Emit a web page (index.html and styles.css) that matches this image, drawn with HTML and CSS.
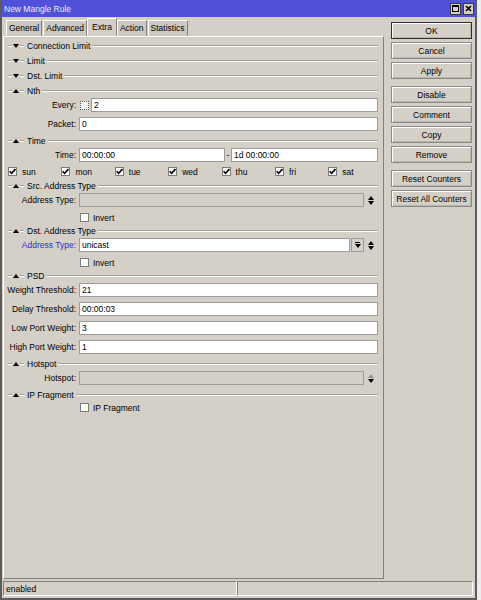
FILE: index.html
```html
<!DOCTYPE html>
<html>
<head>
  <meta charset="utf-8">
  <title>New Mangle Rule</title>
  <link rel="stylesheet" href="styles.css">
</head>
<body>
  <div class="window">
    <div class="titlebar">
      <span class="title">New Mangle Rule</span>
      <span class="tbtn">
        <svg width="7" height="7" viewBox="0 0 7 7"><rect x="0.5" y="0.5" width="6" height="6" fill="none" stroke="#000"/><rect x="0" y="0" width="7" height="2" fill="#000"/></svg>
      </span>
      <span class="tbtn">
        <svg width="7" height="7" viewBox="0 0 7 7"><path d="M1 1 L6 6 M6 1 L1 6" stroke="#000" stroke-width="1.6"/></svg>
      </span>
    </div>

    <div class="client">
      <div class="main">
        <div class="left">
          <div class="tabs">
            <div class="tab">General</div>
            <div class="tab">Advanced</div>
            <div class="tab active">Extra</div>
            <div class="tab">Action</div>
            <div class="tab">Statistics</div>
          </div>

          <div class="panel">
            <div class="sec">
              <div class="head"><i class="dash"></i><i class="tri down"></i><i class="dash"></i><span class="htext">Connection Limit</span><i class="rule"></i></div>
            </div>
            <div class="sec">
              <div class="head"><i class="dash"></i><i class="tri down"></i><i class="dash"></i><span class="htext">Limit</span><i class="rule"></i></div>
            </div>
            <div class="sec">
              <div class="head"><i class="dash"></i><i class="tri down"></i><i class="dash"></i><span class="htext">Dst. Limit</span><i class="rule"></i></div>
            </div>

            <div class="sec">
              <div class="head"><i class="dash"></i><i class="tri up"></i><i class="dash"></i><span class="htext">Nth</span><i class="rule"></i></div>
              <div class="body">
                <div class="row">
                  <span class="lbl">Every:</span>
                  <span class="cb dotted"></span>
                  <span class="field every">2</span>
                </div>
                <div class="row">
                  <span class="lbl">Packet:</span>
                  <span class="field">0</span>
                </div>
              </div>
            </div>

            <div class="sec">
              <div class="head"><i class="dash"></i><i class="tri up"></i><i class="dash"></i><span class="htext">Time</span><i class="rule"></i></div>
              <div class="body">
                <div class="row">
                  <span class="lbl">Time:</span>
                  <span class="field from">00:00:00</span>
                  <span class="sep">-</span>
                  <span class="field">1d 00:00:00</span>
                </div>
                <div class="days">
                  <span class="day"><span class="cb"><svg width="7" height="7" viewBox="0 0 7 7"><path d="M0.5 3.2 L2.6 5.4 L6.5 1" stroke="#000" stroke-width="1.6" fill="none"/></svg></span>sun</span>
                  <span class="day"><span class="cb"><svg width="7" height="7" viewBox="0 0 7 7"><path d="M0.5 3.2 L2.6 5.4 L6.5 1" stroke="#000" stroke-width="1.6" fill="none"/></svg></span>mon</span>
                  <span class="day"><span class="cb"><svg width="7" height="7" viewBox="0 0 7 7"><path d="M0.5 3.2 L2.6 5.4 L6.5 1" stroke="#000" stroke-width="1.6" fill="none"/></svg></span>tue</span>
                  <span class="day"><span class="cb"><svg width="7" height="7" viewBox="0 0 7 7"><path d="M0.5 3.2 L2.6 5.4 L6.5 1" stroke="#000" stroke-width="1.6" fill="none"/></svg></span>wed</span>
                  <span class="day"><span class="cb"><svg width="7" height="7" viewBox="0 0 7 7"><path d="M0.5 3.2 L2.6 5.4 L6.5 1" stroke="#000" stroke-width="1.6" fill="none"/></svg></span>thu</span>
                  <span class="day"><span class="cb"><svg width="7" height="7" viewBox="0 0 7 7"><path d="M0.5 3.2 L2.6 5.4 L6.5 1" stroke="#000" stroke-width="1.6" fill="none"/></svg></span>fri</span>
                  <span class="day"><span class="cb"><svg width="7" height="7" viewBox="0 0 7 7"><path d="M0.5 3.2 L2.6 5.4 L6.5 1" stroke="#000" stroke-width="1.6" fill="none"/></svg></span>sat</span>
                </div>
              </div>
            </div>

            <div class="sec">
              <div class="head"><i class="dash"></i><i class="tri up"></i><i class="dash"></i><span class="htext">Src. Address Type</span><i class="rule"></i></div>
              <div class="body">
                <div class="row">
                  <span class="lbl">Address Type:</span>
                  <span class="field off"></span>
                  <span class="spin"><i class="tri up"></i><i class="tri down"></i></span>
                </div>
                <div class="check"><span class="cb"></span>Invert</div>
              </div>
            </div>

            <div class="sec">
              <div class="head"><i class="dash"></i><i class="tri up"></i><i class="dash"></i><span class="htext">Dst. Address Type</span><i class="rule"></i></div>
              <div class="body">
                <div class="row">
                  <span class="lbl blue">Address Type:</span>
                  <span class="field">unicast</span>
                  <span class="drop"><i class="bar"></i><i class="tri down"></i></span>
                  <span class="spin"><i class="tri up"></i><i class="tri down"></i></span>
                </div>
                <div class="check"><span class="cb"></span>Invert</div>
              </div>
            </div>

            <div class="sec">
              <div class="head"><i class="dash"></i><i class="tri up"></i><i class="dash"></i><span class="htext">PSD</span><i class="rule"></i></div>
              <div class="body">
                <div class="row">
                  <span class="lbl">Weight Threshold:</span>
                  <span class="field">21</span>
                </div>
                <div class="row">
                  <span class="lbl">Delay Threshold:</span>
                  <span class="field">00:00:03</span>
                </div>
                <div class="row">
                  <span class="lbl">Low Port Weight:</span>
                  <span class="field">3</span>
                </div>
                <div class="row">
                  <span class="lbl">High Port Weight:</span>
                  <span class="field">1</span>
                </div>
              </div>
            </div>

            <div class="sec">
              <div class="head"><i class="dash"></i><i class="tri up"></i><i class="dash"></i><span class="htext">Hotspot</span><i class="rule"></i></div>
              <div class="body">
                <div class="row">
                  <span class="lbl">Hotspot:</span>
                  <span class="field off"></span>
                  <span class="spin"><i class="tri up dim"></i><i class="tri down"></i></span>
                </div>
              </div>
            </div>

            <div class="sec">
              <div class="head"><i class="dash"></i><i class="tri up"></i><i class="dash"></i><span class="htext">IP Fragment</span><i class="rule"></i></div>
              <div class="body">
                <div class="check"><span class="cb"></span>IP Fragment</div>
              </div>
            </div>
          </div>
        </div>

        <div class="buttons">
          <div class="btn default">OK</div>
          <div class="btn">Cancel</div>
          <div class="btn">Apply</div>
          <div class="btn group">Disable</div>
          <div class="btn">Comment</div>
          <div class="btn">Copy</div>
          <div class="btn">Remove</div>
          <div class="btn group">Reset Counters</div>
          <div class="btn">Reset All Counters</div>
        </div>
      </div>

      <div class="status">
        <div class="cell first">enabled</div>
        <div class="cell"></div>
      </div>
    </div>
  </div>
</body>
</html>
```

FILE: styles.css
```css
* {
  box-sizing: border-box;
}
html, body {
  margin: 0;
}
body {
  background: #ececec;
  font-family: "Liberation Sans", Arial, sans-serif;
  font-size: 8.5px;
  color: #000;
}

.window {
  width: 477px;
  height: 600px;
  display: flex;
  flex-direction: column;
  background: #d4d0c8;
  border: 2px solid #5c5c5c;
  border-top: 0;
}

/* title bar */
.titlebar {
  height: 17px;
  display: flex;
  align-items: center;
  padding: 0 1px 0 2px;
  background: #5050d8;
  color: #ececf6;
}
.titlebar .title {
  flex: 1;
}
.tbtn {
  width: 11px;
  height: 12px;
  margin-left: 2px;
  display: flex;
  align-items: center;
  justify-content: center;
  background: #d4d0c8;
  border: 1px solid #3a3a3a;
}

.client {
  flex: 1;
  display: flex;
  flex-direction: column;
  padding: 1px 3px 2px 1px;
}
.main {
  flex: 1;
  display: flex;
  gap: 7px;
}
.left {
  width: 381px;
  display: flex;
  flex-direction: column;
}

/* tabs */
.tabs {
  height: 18px;
  display: flex;
  align-items: flex-end;
  gap: 1px;
  padding-left: 3px;
}
.tab {
  height: 16px;
  padding: 0 2px;
  display: flex;
  align-items: center;
  background: #cdc9c1;
  border: 1px solid;
  border-color: #fff #808080 transparent #fff;
}
.tab.active {
  height: 18px;
  padding: 0 4px;
  margin: 0 -1px;
  background: #d4d0c8;
}

.panel {
  flex: 1;
  padding-top: 1.5px;
  border: 1px solid;
  border-color: #fff #808080 #808080 #fff;
}

/* section headers */
.head {
  height: 15px;
  display: flex;
  align-items: center;
  padding: 0 5px 0 4px;
}
.dash, .rule {
  height: 2px;
  border-top: 1px solid #a29e96;
  border-bottom: 1px solid #fff;
}
.dash {
  width: 4px;
}
.rule {
  flex: 1;
}
.htext {
  margin: 0 2px 0 3px;
}
.tri {
  width: 0;
  height: 0;
  border-left: 3.5px solid transparent;
  border-right: 3.5px solid transparent;
}
.head .tri {
  margin: 0 1px;
}
.tri.down {
  border-top: 4px solid #000;
}
.tri.up {
  border-bottom: 4px solid #000;
}
.tri.up.dim {
  border-bottom-color: #8e9a8e;
}

.body {
  margin-top: -3px;
}

/* field rows */
.row {
  height: 19px;
  display: flex;
  align-items: center;
  padding-right: 5px;
}
.lbl {
  width: 72px;
  margin-right: 3px;
  text-align: right;
  white-space: nowrap;
}
.lbl.blue {
  color: #2a2ae0;
}
.field {
  flex: 1;
  height: 14px;
  padding: 0 2px;
  display: flex;
  align-items: center;
  background: #fff;
  border: 1px solid #9c9c9c;
}
.field.off {
  background: transparent;
}
.field.from {
  flex: none;
  width: 146px;
}
.field.every {
  margin-left: 2px;
}
.sep {
  width: 6px;
  text-align: center;
}
.spin {
  width: 14px;
  display: flex;
  flex-direction: column;
  align-items: center;
  gap: 1px;
}
.drop {
  width: 13px;
  height: 14px;
  margin-left: 1px;
  display: flex;
  flex-direction: column;
  align-items: center;
  justify-content: center;
  gap: 1px;
  border: 1px solid #9c9c9c;
}
.drop .bar {
  width: 5px;
  height: 1px;
  background: #000;
}

/* checkboxes */
.cb {
  width: 9px;
  height: 9px;
  display: inline-flex;
  align-items: center;
  justify-content: center;
  flex: none;
  background: #fff;
  border: 1px solid #7c7c7c;
}
.cb.dotted {
  margin-left: 1px;
  background: #f2f2f2;
  border-style: dotted;
  border-color: #555;
}
.check {
  height: 12px;
  margin-top: 2px;
  padding-left: 76px;
  display: flex;
  align-items: center;
  gap: 4px;
}
.days {
  height: 14px;
  padding-left: 4px;
  display: grid;
  grid-template-columns: repeat(7, 53.4px);
  align-items: center;
}
.day {
  display: flex;
  align-items: center;
  gap: 5px;
}

/* right column */
.buttons {
  width: 81px;
  padding-top: 4px;
  display: flex;
  flex-direction: column;
  gap: 3px;
}
.btn {
  height: 17px;
  display: flex;
  align-items: center;
  justify-content: center;
  border: 1px solid #8a8a8a;
  box-shadow: inset 1px 1px #fff, inset -1px -1px #bab6ae;
}
.btn.default {
  border-color: #2e2e2e;
}
.btn.group {
  margin-top: 4px;
}

/* status bar */
.status {
  height: 15px;
  margin-top: 2px;
  margin-right: -1px;
  display: flex;
}
.cell {
  flex: 1;
  padding: 0 2px;
  display: flex;
  align-items: center;
  border: 1px solid;
  border-color: #808080 #fff #fff #808080;
}
.cell.first {
  flex: none;
  width: 234px;
}
```
